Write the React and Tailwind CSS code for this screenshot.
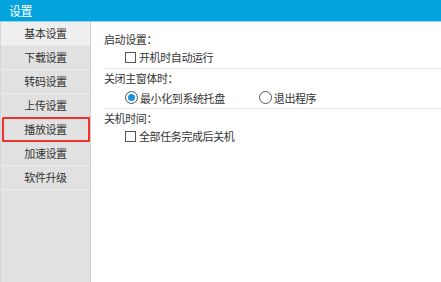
import React from 'react';

const menu = ['基本设置', '下载设置', '转码设置', '上传设置', '播放设置', '加速设置', '软件升级'];

const Check = ({ label }) => (
  <div className="flex items-center h-[18px] pl-[21px]">
    <span className="w-[11px] h-[11px] border border-[#555] bg-white mr-[3px]"></span>
    <span>{label}</span>
  </div>
);

const Radio = ({ label, on }) => (
  <div className="flex items-center">
    <span className="w-[13px] h-[13px] rounded-full border border-[#555] bg-white flex items-center justify-center mr-[2px]">
      {on && <span className="w-[7px] h-[7px] rounded-full bg-[#1a8fe3]"></span>}
    </span>
    <span>{label}</span>
  </div>
);

const App = () => {
  return (
    <div
      className="w-[441px] h-[282px] bg-white text-[11px] tracking-[-0.4px] text-[#333] overflow-hidden flex flex-col"
      style={{ fontFamily: '"Noto Sans CJK SC", "Liberation Sans", sans-serif' }}
    >
      <div className="h-[21px] bg-[#03a3de] text-white text-[12px] flex items-center pl-[9px] border-b border-[#8fd3ee] box-content">
        设置
      </div>
      <div className="flex flex-1">
        <div className="w-[91px] bg-[#e1e1e1] border-l border-[#d6d6d6] border-r border-r-[#cfcfcf] flex flex-col">
          {menu.map((m, i) => (
            <div
              key={m}
              className={`h-[24px] flex items-center justify-center border-b border-[#ececec] relative ${
                i === 0 ? 'bg-[#efefef]' : ''
              }`}
            >
              {m}
              {i === 4 && (
                <div className="absolute left-[1px] right-[0px] top-[-1px] bottom-[-1px] border-2 border-[#f0322e] rounded-[1px]"></div>
              )}
            </div>
          ))}
        </div>
        <div className="flex-1 pl-[13px] pt-[8px] leading-[18px]">
          <div>启动设置：</div>
          <Check label="开机时自动运行" />
          <div className="border-b border-[#e3e3e3] mt-[2px] mb-[0px]"></div>
          <div>关闭主窗体时：</div>
          <div className="flex items-center h-[21px] pl-[21px] gap-[34px]">
            <Radio label="最小化到系统托盘" on />
            <Radio label="退出程序" />
          </div>
          <div className="border-b border-[#e3e3e3] mt-[0px] mb-[0px]"></div>
          <div>关机时间：</div>
          <Check label="全部任务完成后关机" />
        </div>
      </div>
    </div>
  );
};

export default App;
